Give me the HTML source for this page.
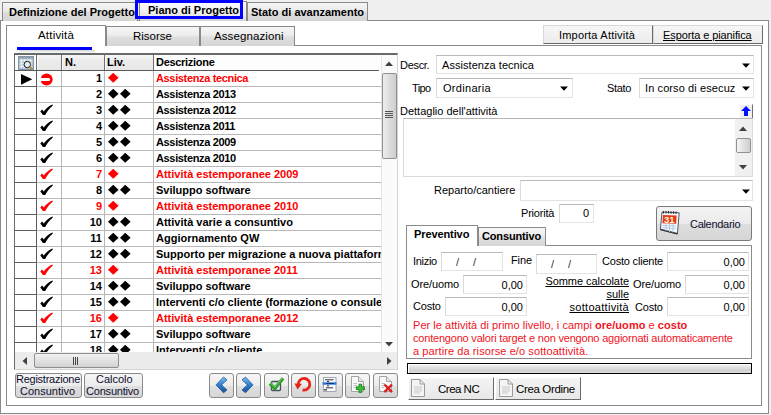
<!DOCTYPE html>
<html><head><meta charset="utf-8"><style>
*{box-sizing:border-box;margin:0;padding:0}
html,body{width:771px;height:415px;overflow:hidden;background:#f0f0f0;font-family:"Liberation Sans",sans-serif;font-size:11px;color:#000}
.a{position:absolute}
.t{position:absolute;white-space:nowrap;line-height:13px;font-size:11px}
.b{font-weight:bold}
.red{color:#f00}
</style></head><body>
<div class="a" style="left:0px;top:20px;width:769px;height:394px;background:#fff;border:1px solid #8a8a8a"></div>
<div class="a" style="left:2px;top:2px;width:136px;height:19px;border:1px solid #8a8a8a;border-bottom:none;background:linear-gradient(#f6f6f6,#e9e9e9 45%,#dcdcdc 55%,#d4d4d4)"></div>
<div class="t" style="left:9px;top:6px;font-weight:bold">Definizione del Progetto</div>
<div class="a" style="left:247px;top:2px;width:121px;height:19px;border:1px solid #8a8a8a;border-bottom:none;background:linear-gradient(#f6f6f6,#e9e9e9 45%,#dcdcdc 55%,#d4d4d4)"></div>
<div class="t" style="left:251px;top:6px;font-weight:bold">Stato di avanzamento</div>
<div class="a" style="left:139px;top:1px;width:108px;height:20px;border:1px solid #8a8a8a;border-bottom:none;background:linear-gradient(#fafafa,#f0f0f0 50%,#e4e4e4 80%,#d2d2d2)"></div>
<div class="t" style="left:148px;top:4px;font-weight:bold">Piano di Progetto</div>
<div class="a" style="left:135px;top:0px;width:108px;height:19px;border:3px solid #0000ff"></div>
<div class="a" style="left:6px;top:45px;width:756px;height:361px;background:#fff;border:1px solid #8a8a8a"></div>
<div class="a" style="left:106px;top:26px;width:94px;height:20px;border:1px solid #8a8a8a;border-bottom:none;background:linear-gradient(#f7f7f7,#ebebeb 45%,#dedede 55%,#d6d6d6)"></div>
<div class="t" style="left:133px;top:30px;font-size:11.5px">Risorse</div>
<div class="a" style="left:200px;top:26px;width:95px;height:20px;border:1px solid #8a8a8a;border-bottom:none;background:linear-gradient(#f7f7f7,#ebebeb 45%,#dedede 55%,#d6d6d6)"></div>
<div class="t" style="left:214px;top:30px;font-size:11.5px;letter-spacing:0.1px">Assegnazioni</div>
<div class="a" style="left:6px;top:25px;width:100px;height:21px;border:1px solid #8a8a8a;border-bottom:none;background:#fff"></div>
<div class="t" style="left:38px;top:29px;font-size:11.5px;letter-spacing:0.2px">Attività</div>
<div class="a" style="left:19px;top:50px;width:76px;height:3px;background:linear-gradient(rgba(0,0,0,0.16),rgba(0,0,0,0.02))"></div>
<div class="a" style="left:17px;top:47px;width:75px;height:3px;background:#0000ff"></div>
<div class="a" style="left:543px;top:25px;width:110px;height:19px;border:1px solid;border-color:#d8d8d8 #6a6a6a #6a6a6a #d8d8d8;background:linear-gradient(#f6f6f6,#ececec)"></div>
<div class="t" style="left:559px;top:29px;letter-spacing:0.2px">Importa Attività</div>
<div class="a" style="left:653px;top:25px;width:110px;height:19px;border:1px solid;border-color:#d8d8d8 #6a6a6a #6a6a6a #d8d8d8;background:linear-gradient(#f6f6f6,#ececec)"></div>
<div class="t" style="left:663px;top:29px;letter-spacing:-0.1px"><u>Esporta e pianifica</u></div>
<div class="a" style="left:14px;top:53px;width:384px;height:317px;background:#fff;border-left:1px solid #6a6a6a;border-top:2px solid #6a6a6a;border-right:1px solid #d4d4d4;border-bottom:1px solid #d4d4d4"></div>
<div class="a" style="left:15px;top:55px;width:366px;height:297px;overflow:hidden">
<div class="a" style="left:0px;top:0px;width:366px;height:15px;background:#fdfdfd"></div>
<div class="a" style="left:22px;top:0px;width:116px;height:15px;background:linear-gradient(#f6f6f6,#ebebeb 40%,#e8e8e8)"></div>
<div class="a" style="left:21px;top:0px;width:1px;height:15px;background:#6e6e6e"></div>
<div class="a" style="left:22px;top:1px;width:1px;height:14px;background:#fbfbfb"></div>
<div class="a" style="left:46px;top:0px;width:1px;height:15px;background:#6e6e6e"></div>
<div class="a" style="left:47px;top:1px;width:1px;height:14px;background:#fbfbfb"></div>
<div class="a" style="left:89px;top:0px;width:1px;height:15px;background:#6e6e6e"></div>
<div class="a" style="left:90px;top:1px;width:1px;height:14px;background:#fbfbfb"></div>
<div class="a" style="left:138px;top:0px;width:1px;height:15px;background:#6e6e6e"></div>
<div class="a" style="left:139px;top:1px;width:1px;height:14px;background:#fbfbfb"></div>
<div class="a" style="left:0px;top:15px;width:364px;height:1px;background:#5a5a5a"></div>
<div class="t" style="left:50px;top:1px;font-weight:bold">N.</div>
<div class="t" style="left:92px;top:1px;font-weight:bold">Liv.</div>
<div class="t" style="left:141px;top:1px;font-weight:bold;letter-spacing:-0.3px">Descrizione</div>
<svg class="a" style="left:3px;top:1px" width="16" height="14" viewBox="0 0 16 14"><rect x="0.5" y="0.5" width="15" height="13" fill="#b4c4d4" stroke="#8496aa"/><rect x="1" y="1" width="14" height="1.5" fill="#8fa0b2"/><path d="M2.5 3.5h2v2h-2zM5.5 3.5h2v2h-2zM8.5 3.5h2v2h-2zM11.5 3.5h2v2h-2zM2.5 6.5h2v2h-2zM5.5 6.5h2v2h-2zM8.5 6.5h2v2h-2zM11.5 6.5h2v2h-2zM2.5 9.5h2v2h-2zM5.5 9.5h2v2h-2zM8.5 9.5h2v2h-2zM11.5 9.5h2v2h-2z" fill="#ffffff"/><circle cx="9.3" cy="8.5" r="3.2" fill="#e4ecf4" stroke="#1a1a1a" stroke-width="1"/><path d="M11.6 10.8L14.4 13.2" stroke="#a88a3a" stroke-width="1.8"/></svg>
<div class="a" style="left:0px;top:31px;width:21px;height:1px;background:#5e5e5e"></div>
<div class="a" style="left:22px;top:31px;width:344px;height:1px;background:#b8b8b8"></div>
<svg class="a" style="left:6px;top:19px" width="12" height="11" viewBox="0 0 12 11"><path d="M0 0L11.3 5.3L0 10.8Z" fill="#000"/></svg>
<svg class="a" style="left:25px;top:18px" width="13" height="13" viewBox="0 0 13 13"><circle cx="6.6" cy="6.5" r="6" fill="#f00"/><path d="M0 5H8.6A1.55 1.55 0 0 1 8.6 8.1H0Z" fill="#fff"/></svg>
<div class="t" style="left:47px;width:40px;text-align:right;top:17px;font-weight:bold">1</div>
<svg class="a" style="left:93px;top:18px" width="12" height="11" viewBox="0 0 12 11"><path d="M0 4.8L5.2 -0.2L10.6 4.8L5.2 9.8Z" fill="#f00"/></svg>
<div class="t" style="left:141px;top:17px;font-weight:bold;letter-spacing:-0.35px;color:#f00">Assistenza tecnica</div>
<div class="a" style="left:0px;top:47px;width:21px;height:1px;background:#5e5e5e"></div>
<div class="a" style="left:22px;top:47px;width:344px;height:1px;background:#b8b8b8"></div>
<div class="t" style="left:47px;width:40px;text-align:right;top:33px;font-weight:bold">2</div>
<svg class="a" style="left:93px;top:34px" width="12" height="11" viewBox="0 0 12 11"><path d="M0 4.8L5.2 -0.2L10.6 4.8L5.2 9.8Z" fill="#000"/></svg>
<svg class="a" style="left:105px;top:34px" width="12" height="11" viewBox="0 0 12 11"><path d="M0 4.8L5.2 -0.2L10.6 4.8L5.2 9.8Z" fill="#000"/></svg>
<div class="t" style="left:141px;top:33px;font-weight:bold;letter-spacing:-0.35px">Assistenza 2013</div>
<div class="a" style="left:0px;top:63px;width:21px;height:1px;background:#5e5e5e"></div>
<div class="a" style="left:22px;top:63px;width:344px;height:1px;background:#b8b8b8"></div>
<svg class="a" style="left:25px;top:49px" width="13" height="12" viewBox="0 0 13 12"><path d="M0.3 7.6 L2.0 5.6 L3.8 7.4 C6.0 4.5 8.7 2.1 12.4 0.5 L12.9 1.4 C9.8 3.9 7.2 7.0 5.2 10.9 L3.0 11.1 Z" fill="#000"/></svg>
<div class="t" style="left:47px;width:40px;text-align:right;top:49px;font-weight:bold">3</div>
<svg class="a" style="left:93px;top:50px" width="12" height="11" viewBox="0 0 12 11"><path d="M0 4.8L5.2 -0.2L10.6 4.8L5.2 9.8Z" fill="#000"/></svg>
<svg class="a" style="left:105px;top:50px" width="12" height="11" viewBox="0 0 12 11"><path d="M0 4.8L5.2 -0.2L10.6 4.8L5.2 9.8Z" fill="#000"/></svg>
<div class="t" style="left:141px;top:49px;font-weight:bold;letter-spacing:-0.35px">Assistenza 2012</div>
<div class="a" style="left:0px;top:79px;width:21px;height:1px;background:#5e5e5e"></div>
<div class="a" style="left:22px;top:79px;width:344px;height:1px;background:#b8b8b8"></div>
<svg class="a" style="left:25px;top:65px" width="13" height="12" viewBox="0 0 13 12"><path d="M0.3 7.6 L2.0 5.6 L3.8 7.4 C6.0 4.5 8.7 2.1 12.4 0.5 L12.9 1.4 C9.8 3.9 7.2 7.0 5.2 10.9 L3.0 11.1 Z" fill="#000"/></svg>
<div class="t" style="left:47px;width:40px;text-align:right;top:65px;font-weight:bold">4</div>
<svg class="a" style="left:93px;top:66px" width="12" height="11" viewBox="0 0 12 11"><path d="M0 4.8L5.2 -0.2L10.6 4.8L5.2 9.8Z" fill="#000"/></svg>
<svg class="a" style="left:105px;top:66px" width="12" height="11" viewBox="0 0 12 11"><path d="M0 4.8L5.2 -0.2L10.6 4.8L5.2 9.8Z" fill="#000"/></svg>
<div class="t" style="left:141px;top:65px;font-weight:bold;letter-spacing:-0.35px">Assistenza 2011</div>
<div class="a" style="left:0px;top:95px;width:21px;height:1px;background:#5e5e5e"></div>
<div class="a" style="left:22px;top:95px;width:344px;height:1px;background:#b8b8b8"></div>
<svg class="a" style="left:25px;top:81px" width="13" height="12" viewBox="0 0 13 12"><path d="M0.3 7.6 L2.0 5.6 L3.8 7.4 C6.0 4.5 8.7 2.1 12.4 0.5 L12.9 1.4 C9.8 3.9 7.2 7.0 5.2 10.9 L3.0 11.1 Z" fill="#000"/></svg>
<div class="t" style="left:47px;width:40px;text-align:right;top:81px;font-weight:bold">5</div>
<svg class="a" style="left:93px;top:82px" width="12" height="11" viewBox="0 0 12 11"><path d="M0 4.8L5.2 -0.2L10.6 4.8L5.2 9.8Z" fill="#000"/></svg>
<svg class="a" style="left:105px;top:82px" width="12" height="11" viewBox="0 0 12 11"><path d="M0 4.8L5.2 -0.2L10.6 4.8L5.2 9.8Z" fill="#000"/></svg>
<div class="t" style="left:141px;top:81px;font-weight:bold;letter-spacing:-0.35px">Assistenza 2009</div>
<div class="a" style="left:0px;top:111px;width:21px;height:1px;background:#5e5e5e"></div>
<div class="a" style="left:22px;top:111px;width:344px;height:1px;background:#b8b8b8"></div>
<svg class="a" style="left:25px;top:97px" width="13" height="12" viewBox="0 0 13 12"><path d="M0.3 7.6 L2.0 5.6 L3.8 7.4 C6.0 4.5 8.7 2.1 12.4 0.5 L12.9 1.4 C9.8 3.9 7.2 7.0 5.2 10.9 L3.0 11.1 Z" fill="#000"/></svg>
<div class="t" style="left:47px;width:40px;text-align:right;top:97px;font-weight:bold">6</div>
<svg class="a" style="left:93px;top:98px" width="12" height="11" viewBox="0 0 12 11"><path d="M0 4.8L5.2 -0.2L10.6 4.8L5.2 9.8Z" fill="#000"/></svg>
<svg class="a" style="left:105px;top:98px" width="12" height="11" viewBox="0 0 12 11"><path d="M0 4.8L5.2 -0.2L10.6 4.8L5.2 9.8Z" fill="#000"/></svg>
<div class="t" style="left:141px;top:97px;font-weight:bold;letter-spacing:-0.35px">Assistenza 2010</div>
<div class="a" style="left:0px;top:127px;width:21px;height:1px;background:#5e5e5e"></div>
<div class="a" style="left:22px;top:127px;width:344px;height:1px;background:#b8b8b8"></div>
<svg class="a" style="left:25px;top:113px" width="13" height="12" viewBox="0 0 13 12"><path d="M0.3 7.6 L2.0 5.6 L3.8 7.4 C6.0 4.5 8.7 2.1 12.4 0.5 L12.9 1.4 C9.8 3.9 7.2 7.0 5.2 10.9 L3.0 11.1 Z" fill="#f00"/></svg>
<div class="t" style="left:47px;width:40px;text-align:right;top:113px;font-weight:bold;color:#f00">7</div>
<svg class="a" style="left:93px;top:114px" width="12" height="11" viewBox="0 0 12 11"><path d="M0 4.8L5.2 -0.2L10.6 4.8L5.2 9.8Z" fill="#f00"/></svg>
<div class="t" style="left:141px;top:113px;font-weight:bold;letter-spacing:0;color:#f00">Attività estemporanee 2009</div>
<div class="a" style="left:0px;top:143px;width:21px;height:1px;background:#5e5e5e"></div>
<div class="a" style="left:22px;top:143px;width:344px;height:1px;background:#b8b8b8"></div>
<svg class="a" style="left:25px;top:129px" width="13" height="12" viewBox="0 0 13 12"><path d="M0.3 7.6 L2.0 5.6 L3.8 7.4 C6.0 4.5 8.7 2.1 12.4 0.5 L12.9 1.4 C9.8 3.9 7.2 7.0 5.2 10.9 L3.0 11.1 Z" fill="#000"/></svg>
<div class="t" style="left:47px;width:40px;text-align:right;top:129px;font-weight:bold">8</div>
<svg class="a" style="left:93px;top:130px" width="12" height="11" viewBox="0 0 12 11"><path d="M0 4.8L5.2 -0.2L10.6 4.8L5.2 9.8Z" fill="#000"/></svg>
<svg class="a" style="left:105px;top:130px" width="12" height="11" viewBox="0 0 12 11"><path d="M0 4.8L5.2 -0.2L10.6 4.8L5.2 9.8Z" fill="#000"/></svg>
<div class="t" style="left:141px;top:129px;font-weight:bold;letter-spacing:0">Sviluppo software</div>
<div class="a" style="left:0px;top:159px;width:21px;height:1px;background:#5e5e5e"></div>
<div class="a" style="left:22px;top:159px;width:344px;height:1px;background:#b8b8b8"></div>
<svg class="a" style="left:25px;top:145px" width="13" height="12" viewBox="0 0 13 12"><path d="M0.3 7.6 L2.0 5.6 L3.8 7.4 C6.0 4.5 8.7 2.1 12.4 0.5 L12.9 1.4 C9.8 3.9 7.2 7.0 5.2 10.9 L3.0 11.1 Z" fill="#f00"/></svg>
<div class="t" style="left:47px;width:40px;text-align:right;top:145px;font-weight:bold;color:#f00">9</div>
<svg class="a" style="left:93px;top:146px" width="12" height="11" viewBox="0 0 12 11"><path d="M0 4.8L5.2 -0.2L10.6 4.8L5.2 9.8Z" fill="#f00"/></svg>
<div class="t" style="left:141px;top:145px;font-weight:bold;letter-spacing:0;color:#f00">Attività estemporanee 2010</div>
<div class="a" style="left:0px;top:175px;width:21px;height:1px;background:#5e5e5e"></div>
<div class="a" style="left:22px;top:175px;width:344px;height:1px;background:#b8b8b8"></div>
<svg class="a" style="left:25px;top:161px" width="13" height="12" viewBox="0 0 13 12"><path d="M0.3 7.6 L2.0 5.6 L3.8 7.4 C6.0 4.5 8.7 2.1 12.4 0.5 L12.9 1.4 C9.8 3.9 7.2 7.0 5.2 10.9 L3.0 11.1 Z" fill="#000"/></svg>
<div class="t" style="left:47px;width:40px;text-align:right;top:161px;font-weight:bold">10</div>
<svg class="a" style="left:93px;top:162px" width="12" height="11" viewBox="0 0 12 11"><path d="M0 4.8L5.2 -0.2L10.6 4.8L5.2 9.8Z" fill="#000"/></svg>
<svg class="a" style="left:105px;top:162px" width="12" height="11" viewBox="0 0 12 11"><path d="M0 4.8L5.2 -0.2L10.6 4.8L5.2 9.8Z" fill="#000"/></svg>
<div class="t" style="left:141px;top:161px;font-weight:bold;letter-spacing:0">Attività varie a consuntivo</div>
<div class="a" style="left:0px;top:191px;width:21px;height:1px;background:#5e5e5e"></div>
<div class="a" style="left:22px;top:191px;width:344px;height:1px;background:#b8b8b8"></div>
<svg class="a" style="left:25px;top:177px" width="13" height="12" viewBox="0 0 13 12"><path d="M0.3 7.6 L2.0 5.6 L3.8 7.4 C6.0 4.5 8.7 2.1 12.4 0.5 L12.9 1.4 C9.8 3.9 7.2 7.0 5.2 10.9 L3.0 11.1 Z" fill="#000"/></svg>
<div class="t" style="left:47px;width:40px;text-align:right;top:177px;font-weight:bold">11</div>
<svg class="a" style="left:93px;top:178px" width="12" height="11" viewBox="0 0 12 11"><path d="M0 4.8L5.2 -0.2L10.6 4.8L5.2 9.8Z" fill="#000"/></svg>
<svg class="a" style="left:105px;top:178px" width="12" height="11" viewBox="0 0 12 11"><path d="M0 4.8L5.2 -0.2L10.6 4.8L5.2 9.8Z" fill="#000"/></svg>
<div class="t" style="left:141px;top:177px;font-weight:bold;letter-spacing:0">Aggiornamento QW</div>
<div class="a" style="left:0px;top:207px;width:21px;height:1px;background:#5e5e5e"></div>
<div class="a" style="left:22px;top:207px;width:344px;height:1px;background:#b8b8b8"></div>
<svg class="a" style="left:25px;top:193px" width="13" height="12" viewBox="0 0 13 12"><path d="M0.3 7.6 L2.0 5.6 L3.8 7.4 C6.0 4.5 8.7 2.1 12.4 0.5 L12.9 1.4 C9.8 3.9 7.2 7.0 5.2 10.9 L3.0 11.1 Z" fill="#000"/></svg>
<div class="t" style="left:47px;width:40px;text-align:right;top:193px;font-weight:bold">12</div>
<svg class="a" style="left:93px;top:194px" width="12" height="11" viewBox="0 0 12 11"><path d="M0 4.8L5.2 -0.2L10.6 4.8L5.2 9.8Z" fill="#000"/></svg>
<svg class="a" style="left:105px;top:194px" width="12" height="11" viewBox="0 0 12 11"><path d="M0 4.8L5.2 -0.2L10.6 4.8L5.2 9.8Z" fill="#000"/></svg>
<div class="t" style="left:141px;top:193px;font-weight:bold;letter-spacing:0">Supporto per migrazione a nuova piattaforma</div>
<div class="a" style="left:0px;top:223px;width:21px;height:1px;background:#5e5e5e"></div>
<div class="a" style="left:22px;top:223px;width:344px;height:1px;background:#b8b8b8"></div>
<svg class="a" style="left:25px;top:209px" width="13" height="12" viewBox="0 0 13 12"><path d="M0.3 7.6 L2.0 5.6 L3.8 7.4 C6.0 4.5 8.7 2.1 12.4 0.5 L12.9 1.4 C9.8 3.9 7.2 7.0 5.2 10.9 L3.0 11.1 Z" fill="#f00"/></svg>
<div class="t" style="left:47px;width:40px;text-align:right;top:209px;font-weight:bold;color:#f00">13</div>
<svg class="a" style="left:93px;top:210px" width="12" height="11" viewBox="0 0 12 11"><path d="M0 4.8L5.2 -0.2L10.6 4.8L5.2 9.8Z" fill="#f00"/></svg>
<div class="t" style="left:141px;top:209px;font-weight:bold;letter-spacing:0;color:#f00">Attività estemporanee 2011</div>
<div class="a" style="left:0px;top:239px;width:21px;height:1px;background:#5e5e5e"></div>
<div class="a" style="left:22px;top:239px;width:344px;height:1px;background:#b8b8b8"></div>
<svg class="a" style="left:25px;top:225px" width="13" height="12" viewBox="0 0 13 12"><path d="M0.3 7.6 L2.0 5.6 L3.8 7.4 C6.0 4.5 8.7 2.1 12.4 0.5 L12.9 1.4 C9.8 3.9 7.2 7.0 5.2 10.9 L3.0 11.1 Z" fill="#000"/></svg>
<div class="t" style="left:47px;width:40px;text-align:right;top:225px;font-weight:bold">14</div>
<svg class="a" style="left:93px;top:226px" width="12" height="11" viewBox="0 0 12 11"><path d="M0 4.8L5.2 -0.2L10.6 4.8L5.2 9.8Z" fill="#000"/></svg>
<svg class="a" style="left:105px;top:226px" width="12" height="11" viewBox="0 0 12 11"><path d="M0 4.8L5.2 -0.2L10.6 4.8L5.2 9.8Z" fill="#000"/></svg>
<div class="t" style="left:141px;top:225px;font-weight:bold;letter-spacing:0">Sviluppo software</div>
<div class="a" style="left:0px;top:255px;width:21px;height:1px;background:#5e5e5e"></div>
<div class="a" style="left:22px;top:255px;width:344px;height:1px;background:#b8b8b8"></div>
<svg class="a" style="left:25px;top:241px" width="13" height="12" viewBox="0 0 13 12"><path d="M0.3 7.6 L2.0 5.6 L3.8 7.4 C6.0 4.5 8.7 2.1 12.4 0.5 L12.9 1.4 C9.8 3.9 7.2 7.0 5.2 10.9 L3.0 11.1 Z" fill="#000"/></svg>
<div class="t" style="left:47px;width:40px;text-align:right;top:241px;font-weight:bold">15</div>
<svg class="a" style="left:93px;top:242px" width="12" height="11" viewBox="0 0 12 11"><path d="M0 4.8L5.2 -0.2L10.6 4.8L5.2 9.8Z" fill="#000"/></svg>
<svg class="a" style="left:105px;top:242px" width="12" height="11" viewBox="0 0 12 11"><path d="M0 4.8L5.2 -0.2L10.6 4.8L5.2 9.8Z" fill="#000"/></svg>
<div class="t" style="left:141px;top:241px;font-weight:bold;letter-spacing:0">Interventi c/o cliente (formazione o consulenza)</div>
<div class="a" style="left:0px;top:271px;width:21px;height:1px;background:#5e5e5e"></div>
<div class="a" style="left:22px;top:271px;width:344px;height:1px;background:#b8b8b8"></div>
<svg class="a" style="left:25px;top:257px" width="13" height="12" viewBox="0 0 13 12"><path d="M0.3 7.6 L2.0 5.6 L3.8 7.4 C6.0 4.5 8.7 2.1 12.4 0.5 L12.9 1.4 C9.8 3.9 7.2 7.0 5.2 10.9 L3.0 11.1 Z" fill="#f00"/></svg>
<div class="t" style="left:47px;width:40px;text-align:right;top:257px;font-weight:bold;color:#f00">16</div>
<svg class="a" style="left:93px;top:258px" width="12" height="11" viewBox="0 0 12 11"><path d="M0 4.8L5.2 -0.2L10.6 4.8L5.2 9.8Z" fill="#f00"/></svg>
<div class="t" style="left:141px;top:257px;font-weight:bold;letter-spacing:0;color:#f00">Attività estemporanee 2012</div>
<div class="a" style="left:0px;top:287px;width:21px;height:1px;background:#5e5e5e"></div>
<div class="a" style="left:22px;top:287px;width:344px;height:1px;background:#b8b8b8"></div>
<svg class="a" style="left:25px;top:273px" width="13" height="12" viewBox="0 0 13 12"><path d="M0.3 7.6 L2.0 5.6 L3.8 7.4 C6.0 4.5 8.7 2.1 12.4 0.5 L12.9 1.4 C9.8 3.9 7.2 7.0 5.2 10.9 L3.0 11.1 Z" fill="#000"/></svg>
<div class="t" style="left:47px;width:40px;text-align:right;top:273px;font-weight:bold">17</div>
<svg class="a" style="left:93px;top:274px" width="12" height="11" viewBox="0 0 12 11"><path d="M0 4.8L5.2 -0.2L10.6 4.8L5.2 9.8Z" fill="#000"/></svg>
<svg class="a" style="left:105px;top:274px" width="12" height="11" viewBox="0 0 12 11"><path d="M0 4.8L5.2 -0.2L10.6 4.8L5.2 9.8Z" fill="#000"/></svg>
<div class="t" style="left:141px;top:273px;font-weight:bold;letter-spacing:0">Sviluppo software</div>
<div class="a" style="left:0px;top:303px;width:21px;height:1px;background:#5e5e5e"></div>
<div class="a" style="left:22px;top:303px;width:344px;height:1px;background:#b8b8b8"></div>
<svg class="a" style="left:25px;top:289px" width="13" height="12" viewBox="0 0 13 12"><path d="M0.3 7.6 L2.0 5.6 L3.8 7.4 C6.0 4.5 8.7 2.1 12.4 0.5 L12.9 1.4 C9.8 3.9 7.2 7.0 5.2 10.9 L3.0 11.1 Z" fill="#000"/></svg>
<div class="t" style="left:47px;width:40px;text-align:right;top:289px;font-weight:bold">18</div>
<svg class="a" style="left:93px;top:290px" width="12" height="11" viewBox="0 0 12 11"><path d="M0 4.8L5.2 -0.2L10.6 4.8L5.2 9.8Z" fill="#000"/></svg>
<svg class="a" style="left:105px;top:290px" width="12" height="11" viewBox="0 0 12 11"><path d="M0 4.8L5.2 -0.2L10.6 4.8L5.2 9.8Z" fill="#000"/></svg>
<div class="t" style="left:141px;top:289px;font-weight:bold;letter-spacing:0">Interventi c/o cliente</div>
<div class="a" style="left:21px;top:16px;width:1px;height:290px;background:#5e5e5e"></div>
<div class="a" style="left:46px;top:16px;width:1px;height:290px;background:#b8b8b8"></div>
<div class="a" style="left:89px;top:16px;width:1px;height:290px;background:#b8b8b8"></div>
<div class="a" style="left:138px;top:16px;width:1px;height:290px;background:#b8b8b8"></div>
</div>
<div class="a" style="left:381px;top:55px;width:16px;height:297px;background:#fbfbfb;border-left:1px solid #e6e6e6"></div>
<svg class="a" style="left:385px;top:61px" width="8" height="5" viewBox="0 0 8 5"><path d="M0 5L4 0.5L8 5Z" fill="#404040"/></svg>
<div class="a" style="left:382px;top:73px;width:15px;height:86px;border:1px solid #8e8f8f;border-radius:2px;background:linear-gradient(90deg,#eeeeee,#dcdcdc 50%,#cfcfcf)"></div>
<svg class="a" style="left:385px;top:111px" width="8" height="7" viewBox="0 0 8 7"><path d="M0 0.5H8M0 2.5H8M0 4.5H8M0 6.5H8" stroke="#555" stroke-width="1"/></svg>
<svg class="a" style="left:385px;top:342px" width="8" height="5" viewBox="0 0 8 5"><path d="M0 0L4 4.5L8 0Z" fill="#404040"/></svg>
<div class="a" style="left:15px;top:352px;width:382px;height:17px;background:#ececec"></div>
<svg class="a" style="left:22px;top:357px" width="5" height="8" viewBox="0 0 5 8"><path d="M5 0L0.5 4L5 8Z" fill="#404040"/></svg>
<div class="a" style="left:34px;top:353px;width:85px;height:15px;border:1px solid #8e8f8f;border-radius:2px;background:linear-gradient(#f2f2f2,#e2e2e2 50%,#d2d2d2)"></div>
<svg class="a" style="left:72px;top:357px" width="8" height="8" viewBox="0 0 8 8"><path d="M1.5 0V8M3.5 0V8M5.5 0V8" stroke="#444" stroke-width="1"/></svg>
<svg class="a" style="left:387px;top:357px" width="5" height="8" viewBox="0 0 5 8"><path d="M0 0L4.5 4L0 8Z" fill="#404040"/></svg>
<div class="a" style="left:15px;top:373px;width:67px;height:25px;border:1px solid #8a8a8a;border-radius:3px;background:linear-gradient(#f6f6f6,#ececec 50%,#e0e0e0 51%,#d6d6d6)"></div>
<div class="t" style="left:16px;top:373px;letter-spacing:-0.25px;color:#0d0d30">Registrazione</div>
<div class="t" style="left:20px;top:385px;color:#0d0d30">Consuntivo</div>
<div class="a" style="left:84px;top:373px;width:59px;height:25px;border:1px solid #8a8a8a;border-radius:3px;background:linear-gradient(#f6f6f6,#ececec 50%,#e0e0e0 51%,#d6d6d6)"></div>
<div class="t" style="left:96px;top:373px;color:#0d0d30">Calcolo</div>
<div class="t" style="left:86px;top:385px;color:#0d0d30;letter-spacing:-0.2px">Consuntivo</div>
<div class="a" style="left:209px;top:373px;width:25px;height:25px;border:1px solid #8a8a8a;border-radius:3px;background:linear-gradient(#f6f6f6,#ececec 50%,#e0e0e0 51%,#d6d6d6)"></div>
<svg class="a" style="left:209px;top:373px" width="25" height="25" viewBox="0 0 25 25"><defs><linearGradient id="gb" x1="0" y1="0" x2="0" y2="1"><stop offset="0" stop-color="#7fc0f4"/><stop offset="0.5" stop-color="#2f7fd0"/><stop offset="1" stop-color="#1a4f9a"/></linearGradient></defs><path d="M14.5 4L18 6.8L12.6 11.9L18 17L14.5 19.8L7 11.9Z" fill="url(#gb)" stroke="#1a4a8a" stroke-width="0.7"/></svg>
<div class="a" style="left:236px;top:373px;width:25px;height:25px;border:1px solid #8a8a8a;border-radius:3px;background:linear-gradient(#f6f6f6,#ececec 50%,#e0e0e0 51%,#d6d6d6)"></div>
<svg class="a" style="left:236px;top:373px" width="25" height="25" viewBox="0 0 25 25"><path d="M9.5 4L6 6.8L11.4 11.9L6 17L9.5 19.8L17 11.9Z" fill="url(#gb)" stroke="#1a4a8a" stroke-width="0.7"/></svg>
<div class="a" style="left:264px;top:373px;width:25px;height:25px;border:1px solid #8a8a8a;border-radius:3px;background:linear-gradient(#f6f6f6,#ececec 50%,#e0e0e0 51%,#d6d6d6)"></div>
<svg class="a" style="left:264px;top:373px" width="25" height="25" viewBox="0 0 25 25"><rect x="7.5" y="8.5" width="9" height="9" rx="1" fill="#dfe6ee" stroke="#4a5060" stroke-width="1.3"/><path d="M6 10.5L10.8 15.5L19 5.2" fill="none" stroke="#2f9a28" stroke-width="3.4" stroke-linejoin="round"/><path d="M6.8 10.2L10.8 14.3L18.2 5" fill="none" stroke="#7fdc60" stroke-width="1"/></svg>
<div class="a" style="left:291px;top:373px;width:25px;height:25px;border:1px solid #8a8a8a;border-radius:3px;background:linear-gradient(#f6f6f6,#ececec 50%,#e0e0e0 51%,#d6d6d6)"></div>
<svg class="a" style="left:291px;top:373px" width="25" height="25" viewBox="0 0 25 25"><path d="M7.2 11.2A5.8 5.8 0 1 1 11.6 16.9" fill="none" stroke="#e8241a" stroke-width="2.8"/><path d="M3.4 10.4L11 10.8L6.6 16.4Z" fill="#e8241a"/></svg>
<div class="a" style="left:318px;top:373px;width:25px;height:25px;border:1px solid #8a8a8a;border-radius:3px;background:linear-gradient(#f6f6f6,#ececec 50%,#e0e0e0 51%,#d6d6d6)"></div>
<svg class="a" style="left:318px;top:373px" width="25" height="25" viewBox="0 0 25 25"><rect x="5.5" y="4.5" width="12.5" height="14" fill="#fafcff" stroke="#a0a8b4"/><path d="M7 6.8H15.5M9 8.5H11M9 12.8H11M8 14.8H15" stroke="#303030"/><rect x="4.5" y="9.3" width="14" height="2.4" fill="#2a7ad8"/><path d="M8 10.5H16" stroke="#0a2a60" stroke-width="0.8"/><path d="M6 16.8H9" stroke="#303030" stroke-width="1.2"/></svg>
<div class="a" style="left:345px;top:373px;width:25px;height:25px;border:1px solid #8a8a8a;border-radius:3px;background:linear-gradient(#f6f6f6,#ececec 50%,#e0e0e0 51%,#d6d6d6)"></div>
<svg class="a" style="left:345px;top:373px" width="25" height="25" viewBox="0 0 25 25"><path d="M6.5 3.5H13.5L18.5 8.5V18.5H6.5Z" fill="#f8f8f8" stroke="#a4a4a4"/><path d="M13.5 3.5V8.5H18.5" fill="#e4e4e4" stroke="#a4a4a4"/><path d="M8.5 10.5H12M8.5 12.5H12M8.5 14.5H11" stroke="#c0c0c0"/><path d="M10.9 15.3H19.9M15.4 10.8V19.8" stroke="#1a6a1a" stroke-width="3.6"/><path d="M11.4 15.3H19.4M15.4 11.3V19.3" stroke="#3cc03c" stroke-width="2.2"/></svg>
<div class="a" style="left:373px;top:373px;width:25px;height:25px;border:1px solid #8a8a8a;border-radius:3px;background:linear-gradient(#f6f6f6,#ececec 50%,#e0e0e0 51%,#d6d6d6)"></div>
<svg class="a" style="left:373px;top:373px" width="25" height="25" viewBox="0 0 25 25"><path d="M6.5 3.5H13.5L18.5 8.5V18.5H6.5Z" fill="#f8f8f8" stroke="#a4a4a4"/><path d="M13.5 3.5V8.5H18.5" fill="#e4e4e4" stroke="#a4a4a4"/><path d="M8.5 10.5H12M8.5 12.5H12M8.5 14.5H11" stroke="#c0c0c0"/><path d="M11.4 11.5L19 19.1M19 11.5L11.4 19.1" stroke="#d81e1e" stroke-width="2.4"/></svg>
<div class="t" style="left:400px;top:59px;letter-spacing:-0.3px">Descr.</div>
<div class="a" style="left:436px;top:55px;width:318px;height:19px;background:#fff;border:1px solid #e3e3e3;border-top-color:#b9b9b9;border-left-color:#dadada"></div>
<div class="t" style="left:442px;top:59px;letter-spacing:0.05px">Assistenza tecnica</div>
<svg class="a" style="left:742px;top:63px" width="8" height="5" viewBox="0 0 8 5"><path d="M0 0.5H8L4 4.8Z" fill="#000"/></svg>
<div class="t" style="left:412px;top:82px;letter-spacing:-0.6px">Tipo</div>
<div class="a" style="left:436px;top:78px;width:137px;height:20px;background:#fff;border:1px solid #e3e3e3;border-top-color:#b9b9b9;border-left-color:#dadada"></div>
<div class="t" style="left:443px;top:82px;letter-spacing:0.3px">Ordinaria</div>
<svg class="a" style="left:560px;top:86px" width="8" height="5" viewBox="0 0 8 5"><path d="M0 0.5H8L4 4.8Z" fill="#000"/></svg>
<div class="t" style="left:607px;top:82px;letter-spacing:-0.3px">Stato</div>
<div class="a" style="left:639px;top:78px;width:115px;height:20px;background:#fff;border:1px solid #e3e3e3;border-top-color:#b9b9b9;border-left-color:#dadada"></div>
<div class="t" style="left:645px;top:82px;letter-spacing:0.1px">In corso di esecuz</div>
<svg class="a" style="left:742px;top:86px" width="8" height="5" viewBox="0 0 8 5"><path d="M0 0.5H8L4 4.8Z" fill="#000"/></svg>
<div class="t" style="left:400px;top:105px;letter-spacing:0px">Dettaglio dell'attività</div>
<div class="a" style="left:739px;top:104px;width:14px;height:15px;border:1px solid;border-color:#ffffff #707070 #707070 #ffffff;background:#f0f0f0"></div>
<svg class="a" style="left:740px;top:105px" width="12" height="12" viewBox="0 0 12 12"><path d="M6 1L11 6H8V11H4V6H1Z" fill="#0010ff"/></svg>
<div class="a" style="left:403px;top:118px;width:350px;height:59px;background:#fff;border:1px solid #dcdcdc;border-top-color:#b4b4b4"></div>
<div class="a" style="left:735px;top:119px;width:17px;height:57px;background:#f0f0f0"></div>
<svg class="a" style="left:739px;top:126px" width="8" height="5" viewBox="0 0 8 5"><path d="M0 5L4 0.5L8 5Z" fill="#404040"/></svg>
<div class="a" style="left:736px;top:138px;width:15px;height:15px;border:1px solid #8e8f8f;border-radius:2px;background:linear-gradient(90deg,#f6f6f6,#dedede 55%,#cfcfcf)"></div>
<svg class="a" style="left:739px;top:165px" width="8" height="5" viewBox="0 0 8 5"><path d="M0 0L4 4.5L8 0Z" fill="#404040"/></svg>
<div class="t" style="left:434px;top:184px;">Reparto/cantiere</div>
<div class="a" style="left:520px;top:180px;width:233px;height:21px;background:#fff;border:1px solid #e3e3e3;border-top-color:#b9b9b9;border-left-color:#dadada"></div>
<svg class="a" style="left:742px;top:189px" width="8" height="5" viewBox="0 0 8 5"><path d="M0 0.5H8L4 4.8Z" fill="#000"/></svg>
<div class="t" style="left:521px;top:207px;letter-spacing:-0.2px">Priorità</div>
<div class="a" style="left:559px;top:204px;width:35px;height:19px;background:#fff;border:1px solid #e3e3e3;border-top-color:#b9b9b9;border-left-color:#dadada"></div>
<div class="t" style="right:182px;top:207px;">0</div>
<div class="a" style="left:656px;top:206px;width:96px;height:35px;border:1px solid #7a7a7a;border-radius:3px;background:linear-gradient(#f4f4f4,#ebebeb 50%,#dedede 51%,#d6d6d6)"></div>
<svg class="a" style="left:659px;top:209px" width="23" height="28" viewBox="0 0 23 28"><path d="M3 3L20.2 3.8L18.4 25L1.4 20.6Z" fill="#f4f7fb" stroke="#505a66" stroke-width="1"/><path d="M1.6 20.4L18.4 24.8" stroke="#3a3a3a" stroke-width="1.6"/><path d="M4 6L17.6 6.4L17.2 14.8L3.4 14.2Z" fill="#e23a1a"/><text x="5" y="13.6" font-family="Liberation Sans" font-weight="bold" font-size="9.5" fill="#fff4d0">31</text><path d="M3.6 16.5L17 17M3.3 18.8L16.8 19.6M7 15V22M10.5 15V23M14 15V23.5" stroke="#a8c0e0" stroke-width="0.8"/><path d="M4.5 2V4.5M7 2V4.5M9.5 2V4.5M12 2.2V4.7M14.5 2.3V4.8M17 2.4V4.9" stroke="#303030" stroke-width="1.1"/></svg>
<div class="t" style="left:690px;top:218px;letter-spacing:-0.3px;color:#0d0d30">Calendario</div>
<div class="a" style="left:406px;top:245px;width:346px;height:114px;background:#fff;border:1px solid #8a8a8a"></div>
<div class="a" style="left:478px;top:227px;width:68px;height:19px;border:1px solid #8a8a8a;border-bottom:none;background:linear-gradient(#f7f7f7,#ebebeb 45%,#dedede 55%,#d6d6d6)"></div>
<div class="t" style="left:482px;top:230px;font-weight:bold;letter-spacing:-0.15px">Consuntivo</div>
<div class="a" style="left:406px;top:225px;width:72px;height:21px;border:1px solid #8a8a8a;border-bottom:none;background:#fff"></div>
<div class="t" style="left:414px;top:228px;font-weight:bold;letter-spacing:-0.1px">Preventivo</div>
<div class="t" style="left:413px;top:255px;letter-spacing:-0.3px">Inizio</div>
<div class="a" style="left:441px;top:252px;width:62px;height:19px;background:#fff;border:1px solid #e3e3e3;border-top-color:#b9b9b9;border-left-color:#dadada"></div>
<div class="t" style="left:456px;top:256px;color:#333">/</div>
<div class="t" style="left:473px;top:256px;color:#333">/</div>
<div class="t" style="left:511px;top:254px;letter-spacing:-0.1px">Fine</div>
<div class="a" style="left:536px;top:254px;width:61px;height:20px;background:#fff;border:1px solid #e3e3e3;border-top-color:#b9b9b9;border-left-color:#dadada"></div>
<div class="t" style="left:551px;top:258px;color:#333">/</div>
<div class="t" style="left:568px;top:258px;color:#333">/</div>
<div class="t" style="left:602px;top:255px;letter-spacing:-0.2px">Costo cliente</div>
<div class="a" style="left:667px;top:252px;width:82px;height:19px;background:#fff;border:1px solid #e3e3e3;border-top-color:#b9b9b9;border-left-color:#dadada"></div>
<div class="t" style="right:26px;top:256px;">0,00</div>
<div class="t" style="left:411px;top:278px;letter-spacing:-0.1px">Ore/uomo</div>
<div class="a" style="left:463px;top:275px;width:64px;height:19px;background:#fff;border:1px solid #e3e3e3;border-top-color:#b9b9b9;border-left-color:#dadada"></div>
<div class="t" style="right:248px;top:279px;">0,00</div>
<div class="t" style="right:142px;top:275px;letter-spacing:-0.05px"><u>Somme calcolate</u></div>
<div class="t" style="right:142px;top:288px;"><u>sulle</u></div>
<div class="t" style="right:142px;top:301px;letter-spacing:0.3px"><u>sottoattività</u></div>
<div class="t" style="left:633px;top:278px;letter-spacing:-0.1px">Ore/uomo</div>
<div class="a" style="left:685px;top:275px;width:64px;height:19px;background:#fff;border:1px solid #e3e3e3;border-top-color:#b9b9b9;border-left-color:#dadada"></div>
<div class="t" style="right:26px;top:279px;">0,00</div>
<div class="t" style="left:413px;top:300px;letter-spacing:-0.2px">Costo</div>
<div class="a" style="left:445px;top:297px;width:82px;height:19px;background:#fff;border:1px solid #e3e3e3;border-top-color:#b9b9b9;border-left-color:#dadada"></div>
<div class="t" style="right:248px;top:301px;">0,00</div>
<div class="t" style="left:635px;top:301px;letter-spacing:-0.2px">Costo</div>
<div class="a" style="left:667px;top:297px;width:82px;height:19px;background:#fff;border:1px solid #e3e3e3;border-top-color:#b9b9b9;border-left-color:#dadada"></div>
<div class="t" style="right:26px;top:301px;">0,00</div>
<div class="t" style="left:413px;top:319px;color:#f0141e;letter-spacing:0.04px">Per le attività di primo livello, i campi <b>ore/uomo</b> e <b>costo</b></div>
<div class="t" style="left:413px;top:332px;color:#f0141e;letter-spacing:-0.2px">contengono valori target e non vengono aggiornati automaticamente</div>
<div class="t" style="left:413px;top:345px;color:#f0141e;letter-spacing:0.09px">a partire da risorse e/o sottoattività.</div>
<div class="a" style="left:407px;top:363px;width:345px;height:11px;border:1px solid #000;background:linear-gradient(#f6f6f6,#e2e2e2 35%,#d2d2d2 70%,#dcdcdc);box-shadow:inset 1px 1px 0 #fff"></div>
<div class="a" style="left:408px;top:377px;width:86px;height:23px;border:1px solid;border-color:#ffffff #6a6a6a #6a6a6a #ffffff;background:linear-gradient(#f4f4f4,#e8e8e8)"></div>
<svg class="a" style="left:411px;top:379px" width="14" height="18" viewBox="0 0 14 18"><path d="M0.5 0.5H9L13.5 5V17.5H0.5Z" fill="#f4f4f4" stroke="#9a9a9a"/><path d="M9 0.5V5H13.5" fill="none" stroke="#9a9a9a"/><path d="M3 8H11M3 10H11M3 12H11M3 14H9" stroke="#c8c8c8"/></svg>
<div class="t" style="left:438px;top:383px;font-size:11.5px;letter-spacing:-0.5px">Crea NC</div>
<div class="a" style="left:495px;top:377px;width:86px;height:23px;border:1px solid;border-color:#ffffff #6a6a6a #6a6a6a #ffffff;background:linear-gradient(#f4f4f4,#e8e8e8)"></div>
<svg class="a" style="left:499px;top:379px" width="14" height="18" viewBox="0 0 14 18"><path d="M0.5 0.5H9L13.5 5V17.5H0.5Z" fill="#f4f4f4" stroke="#9a9a9a"/><path d="M9 0.5V5H13.5" fill="none" stroke="#9a9a9a"/><path d="M3 8H11M3 10H11M3 12H11M3 14H9" stroke="#c8c8c8"/></svg>
<div class="t" style="left:516px;top:383px;font-size:11.5px;letter-spacing:-0.35px">Crea Ordine</div>
</body></html>
